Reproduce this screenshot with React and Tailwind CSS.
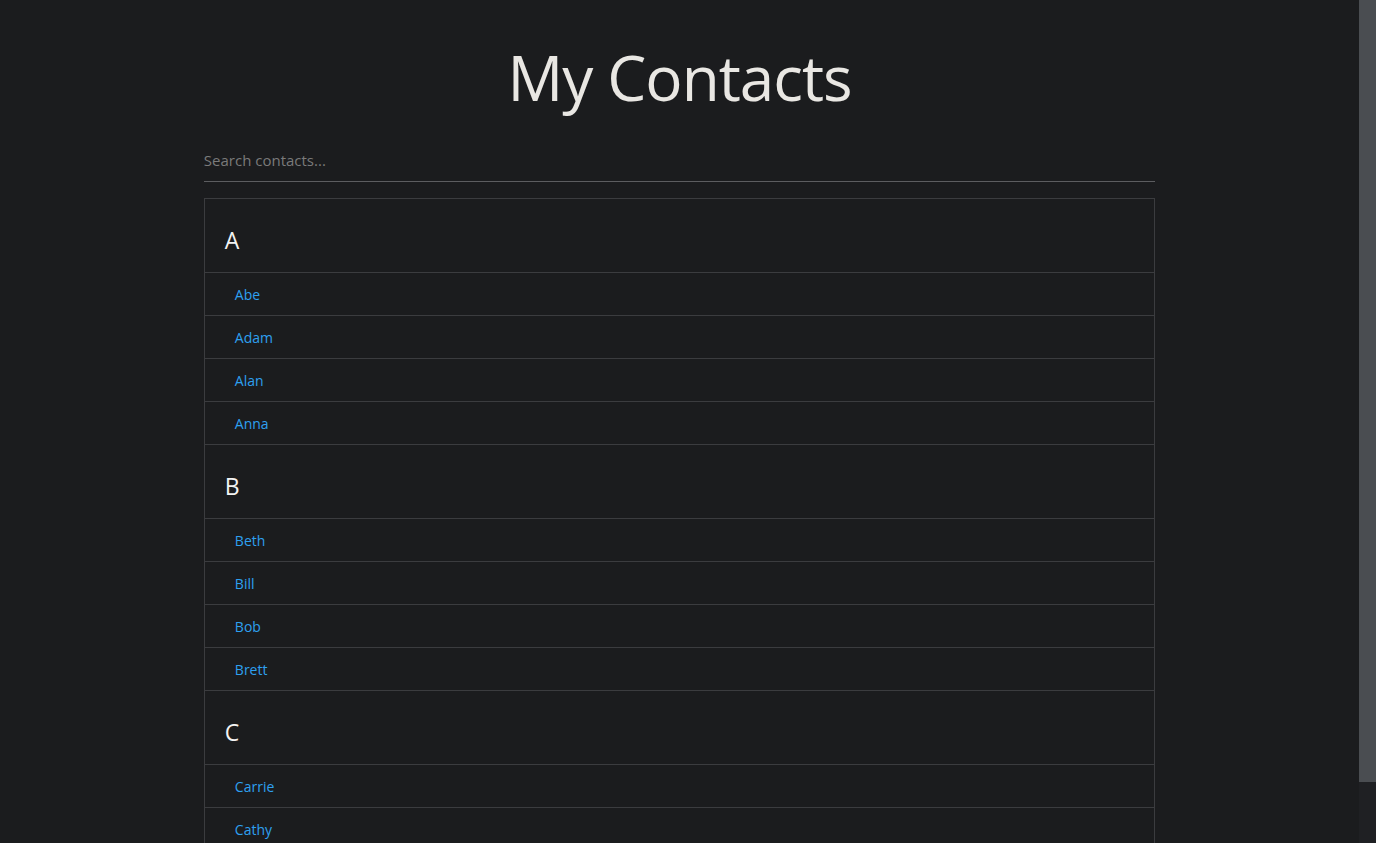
import { useState } from 'react';

const contacts = {
    A: ['Abe', 'Adam', 'Alan', 'Anna'],
    B: ['Beth', 'Bill', 'Bob', 'Brett'],
    C: ['Carrie', 'Cathy', 'Chris', 'Craig'],
};

const App = () => {
    const [query, setQuery] = useState('');

    return (
        <div className="flex h-screen overflow-hidden bg-[#1b1c1e] font-['Open_Sans','Noto_Sans',sans-serif]">
            <main className="flex-1 flex flex-col items-center overflow-hidden">
                <h1 className="mt-[37px] text-[62px] leading-[80px] font-normal tracking-[-1px] text-[#e9e7e3]">My Contacts</h1>

                <div className="w-[70%] mt-[17px]">
                    <input
                        type="text"
                        placeholder="Search contacts..."
                        value={query}
                        onChange={(e) => setQuery(e.target.value)}
                        className="w-full h-[48px] pt-[4px] bg-transparent text-[15px] text-[#d6d6d6] placeholder-[#7a7a7a] border-b border-[#5c5d60] focus:outline-none"
                    />

                    <ul className="mt-[16px] border border-[#3b3c3f]">
                        {Object.entries(contacts).map(([letter, names]) => (
                            <li key={letter}>
                                <div className="h-[74px] flex items-center pt-[9px] px-[20px] border-b border-[#3b3c3f] text-[23px] text-[#f3f3f3]">
                                    {letter}
                                </div>
                                {names
                                    .filter((n) => n.toLowerCase().includes(query.toLowerCase()))
                                    .map((name) => (
                                        <a
                                            key={name}
                                            href="#"
                                            className="h-[43px] flex items-center px-[30px] border-b border-[#3b3c3f] text-[14px] text-[#2ea0f0]"
                                        >
                                            {name}
                                        </a>
                                    ))}
                            </li>
                        ))}
                    </ul>
                </div>
            </main>

            <div className="w-[17px] flex flex-col bg-[#1f2023]">
                <div className="h-[782px] bg-[#4a4d51]" />
            </div>
        </div>
    );
};

export default App;
